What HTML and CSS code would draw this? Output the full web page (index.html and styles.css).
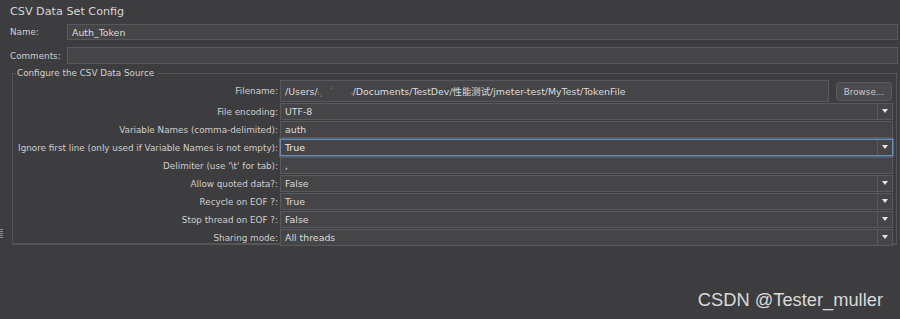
FILE: index.html
```html
<!DOCTYPE html>
<html lang="en">
<head>
    <meta charset="UTF-8">
    <meta name="viewport" content="width=device-width, initial-scale=1.0">
    <title>CSV Data Set Config</title>
    <link rel="stylesheet" href="styles.css">
</head>
<body>
    <div class="panel">
        <h1 class="title">CSV Data Set Config</h1>

        <div class="top-row">
            <label class="top-label">Name:</label>
            <div class="field">Auth_Token</div>
        </div>
        <div class="top-row comments">
            <label class="top-label">Comments:</label>
            <div class="field"></div>
        </div>

        <!-- CSV data source settings -->
        <fieldset class="group">
            <legend>Configure the CSV Data Source</legend>
            <div class="grid">
                <label class="row-label">Filename:</label>
                <div class="file-row">
                    <div class="field">/Users/<span class="blur">ᵢ‸ &nbsp;ˊ &nbsp;&nbsp;&nbsp;&nbsp; ᵢ</span>/Documents/TestDev/性能测试/jmeter-test/MyTest/TokenFile</div>
                    <button type="button" class="browse">Browse...</button>
                </div>

                <label class="row-label">File encoding:</label>
                <div class="combo"><span class="value">UTF-8</span><span class="arrow"></span></div>

                <label class="row-label">Variable Names (comma-delimited):</label>
                <div class="field">auth</div>

                <label class="row-label">Ignore first line (only used if Variable Names is not empty):</label>
                <div class="combo focused"><span class="value">True</span><span class="arrow"></span></div>

                <label class="row-label">Delimiter (use '\t' for tab):</label>
                <div class="field">,</div>

                <label class="row-label">Allow quoted data?:</label>
                <div class="combo"><span class="value">False</span><span class="arrow"></span></div>

                <label class="row-label">Recycle on EOF ?:</label>
                <div class="combo"><span class="value">True</span><span class="arrow"></span></div>

                <label class="row-label">Stop thread on EOF ?:</label>
                <div class="combo"><span class="value">False</span><span class="arrow"></span></div>

                <label class="row-label">Sharing mode:</label>
                <div class="combo"><span class="value">All threads</span><span class="arrow"></span></div>
            </div>
        </fieldset>
    </div>

    <div class="splitter"></div>
    <div class="watermark">CSDN @Tester_muller</div>
</body>
</html>
```

FILE: styles.css
```css
body {
    margin: 0;
    padding: 0;
    background-color: #3d3d3f;
    font-family: "DejaVu Sans", Verdana, "Noto Sans CJK SC", sans-serif;
    font-size: 8.8px;
    color: #cdcdcd;
    height: 319px;
    overflow: hidden;
    position: relative;
}

.panel {
    padding: 2px 2px 0 10px;
}

.title {
    margin: 0;
    height: 20px;
    line-height: 20px;
    font-size: 11.2px;
    font-weight: normal;
    color: #d6d6d6;
}

.top-row {
    display: flex;
    align-items: center;
    height: 16px;
    margin-top: 2px;
}

.top-row.comments {
    height: 17px;
    margin-top: 7px;
}

.top-label {
    width: 57px;
    flex: none;
}

.field {
    flex: 1;
    height: 100%;
    box-sizing: border-box;
    background-color: #454547;
    border: 1px solid #59595b;
    padding: 0 4px;
    display: flex;
    align-items: center;
    color: #dcdcdc;
    font-size: 9.4px;
    white-space: nowrap;
    overflow: hidden;
}

.group {
    margin: 4px 1px 0 2px;
    padding: 2px 3px 0 4px;
    border: 1px solid #555557;
    border-bottom-width: 2px;
    height: 177px;
    box-sizing: border-box;
}

.group legend {
    padding: 0 3px 0 1px;
    margin-left: -1px;
    line-height: 10px;
    color: #d0d0d0;
}

.grid {
    display: grid;
    grid-template-columns: 261px 1fr;
    grid-template-rows: 22px;
    grid-auto-rows: 17px;
    column-gap: 2px;
    row-gap: 1px;
}

.row-label {
    text-align: right;
    white-space: nowrap;
    align-self: center;
}

.file-row {
    display: flex;
    gap: 7px;
    padding-right: 1px;
}

.browse {
    flex: none;
    width: 56px;
    height: 19px;
    margin-top: 2px;
    padding: 0;
    background-color: #4b4b4d;
    border: 1px solid #58585a;
    border-radius: 3px;
    color: #c8c8c8;
    font-family: inherit;
    font-size: 8.8px;
}

.combo {
    display: flex;
    height: 17px;
    box-sizing: border-box;
    background-color: #454547;
    border: 1px solid #59595b;
}

.combo.focused {
    border-color: #6a8bb3;
    box-shadow: 0 0 0 1px #4c6686;
}

.combo .value {
    flex: 1;
    padding: 0 4px;
    display: flex;
    align-items: center;
    color: #dcdcdc;
    font-size: 9.4px;
}

.combo.focused .value {
    color: #f0f0f0;
}

.combo .arrow {
    width: 14px;
    border-left: 1px solid #59595b;
    position: relative;
}

.combo .arrow::after {
    content: "";
    position: absolute;
    left: 4px;
    top: 5px;
    border-left: 3px solid transparent;
    border-right: 3px solid transparent;
    border-top: 4px solid #e6e6e6;
}

.blur {
    color: #8a8a8c;
}

.splitter {
    position: absolute;
    left: 0;
    top: 229px;
    width: 3px;
    height: 9px;
    background: repeating-linear-gradient(#8c8c8e 0 1px, #3d3d3f 1px 2px);
}

.watermark {
    position: absolute;
    right: 17px;
    top: 289px;
    font-size: 18.3px;
    color: #dadada;
    font-family: "Liberation Sans", Arial, sans-serif;
}
```
